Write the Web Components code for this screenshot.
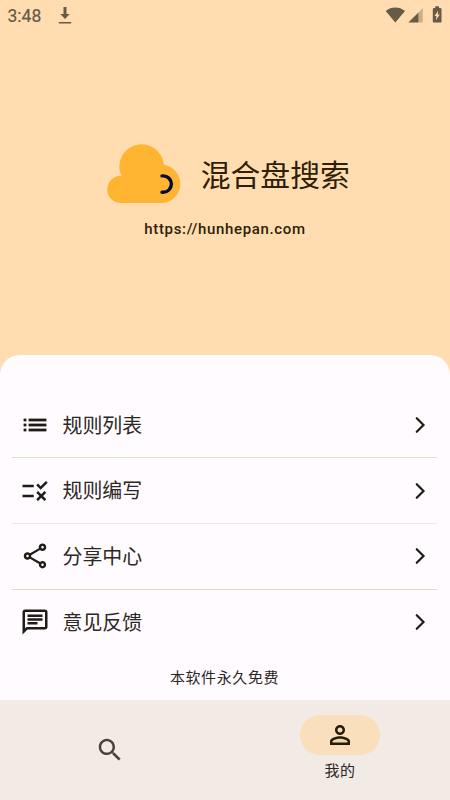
<!DOCTYPE html>
<html lang="zh-CN">
<head>
<meta charset="utf-8">
<title>混合盘搜索</title>
<style>
html,body{margin:0;height:100%}
body{background:#ffddb0;font-family:Roboto,"Noto Sans CJK SC",sans-serif;color:#1f1b16}
</style>
</head>
<body>
<profile-page></profile-page>
<script>
const define=(name,markup)=>{
  const t=document.createElement('template');
  t.innerHTML=markup;
  customElements.define(name,class extends HTMLElement{
    constructor(){super();this.attachShadow({mode:'open'}).append(t.content.cloneNode(true));}
  });
};

const ICONS={
  list:'<path stroke="currentColor" stroke-width=".2" d="M3 13h2v-2H3v2zm0 4h2v-2H3v2zm0-8h2V7H3v2zm4 4h14v-2H7v2zm0 4h14v-2H7v2zM7 7v2h14V7H7z"/>',
  rule:'<path d="M16.54 11 13 7.46l1.41-1.41 2.12 2.12 4.24-4.24 1.41 1.41L16.54 11zM11 7H2v2h9V7zm10 6.41L19.59 12 17 14.59 14.41 12 13 13.41 15.59 16 13 18.59 14.41 20 17 17.41 19.59 20 21 18.59 18.41 16 21 13.41zM11 15H2v2h9v-2z"/>',
  share:'<path d="M18 16.08c-.76 0-1.44.3-1.96.77L8.91 12.7c.05-.23.09-.46.09-.7s-.04-.47-.09-.7l7.05-4.11c.54.5 1.25.81 2.04.81 1.66 0 3-1.34 3-3s-1.34-3-3-3-3 1.34-3 3c0 .24.04.47.09.7L8.04 9.81C7.5 9.31 6.79 9 6 9c-1.66 0-3 1.34-3 3s1.34 3 3 3c.79 0 1.5-.31 2.04-.81l7.12 4.16c-.05.21-.08.43-.08.65 0 1.61 1.31 2.92 2.92 2.92s2.92-1.31 2.92-2.92-1.31-2.92-2.92-2.92zM18 4c.55 0 1 .45 1 1s-.45 1-1 1-1-.45-1-1 .45-1 1-1zM6 13c-.55 0-1-.45-1-1s.45-1 1-1 1 .45 1 1-.45 1-1 1zm12 7.02c-.55 0-1-.45-1-1s.45-1 1-1 1 .45 1 1-.45 1-1 1z"/>',
  chat:'<path d="M4 4h16v12H5.17L4 17.17V4m0-2c-1.1 0-1.99.9-1.99 2L2 22l4-4h14c1.1 0 2-.9 2-2V4c0-1.1-.9-2-2-2H4zm2 10h8v2H6v-2zm0-3h12v2H6V9zm0-3h12v2H6V6z"/>',
  chevron:'<path d="M9.4 6.600 14.800 12l-5.400 5.400" fill="none" stroke="currentColor" stroke-width="1.750" stroke-linecap="round"/>',
  search:'<path d="M15.5 14h-.79l-.28-.27C15.41 12.590 16 11.110 16 9.500 16 5.910 13.090 3 9.500 3S3 5.910 3 9.500 5.910 16 9.500 16c1.610 0 3.090-.59 4.230-1.570l.27.28v.79l5 4.990L20.490 19l-4.990-5zm-6 0C7.010 14 5 11.990 5 9.500S7.010 5 9.500 5 14 7.010 14 9.500 11.990 14 9.500 14z"/>',
  person:'<path fill="#eadb9c" d="M6 17.250C6.200 16.290 9.300 14.900 12 14.900s5.800 1.390 6 2.350V18H6z"/><path d="M12 6c1.100 0 2 .9 2 2s-.9 2-2 2-2-.9-2-2 .9-2 2-2m0 9c2.700 0 5.800 1.290 6 2v1H6v-.99c.2-.72 3.300-2.010 6-2.010m0-11C9.790 4 8 5.790 8 8s1.790 4 4 4 4-1.790 4-4-1.790-4-4-4zm0 9c-2.670 0-8 1.340-8 4v3h16v-3c0-2.660-5.330-4-8-4z"/>'
};
customElements.define('app-icon',class extends HTMLElement{
  constructor(){
    super();
    this.attachShadow({mode:'open'}).innerHTML='<style>:host{display:block;width:30px;height:30px;flex:none}svg{display:block;width:100%;height:100%}</style><svg viewBox="0 0 24 24" fill="currentColor">'+ICONS[this.getAttribute('name')]+'</svg>';
  }
});

define('status-bar',`<style>
:host{display:flex;height:32px;box-sizing:border-box;padding:0 8px 0 7.500px;align-items:center;color:#675a47;font-size:17.500px}
span{line-height:32px;-webkit-text-stroke:.2px}
svg{display:block}
.down{margin-left:16.500px}
.right{margin-left:auto}
</style>
<span>3:48</span>
<svg class="down" width="14" height="32" viewBox="0 0 14 32"><path fill="currentColor" d="M5.500 7h3v7h3.200L7 19l-4.700-5h3.200zM.8 22h12.400v1.600H.8z"/></svg>
<svg class="right" width="57" height="32" viewBox="385 0 57 32"><path fill="currentColor" d="M395.300 22.600 385.700 11Q390 7.600 395.300 7.600T405 11zM408.300 22.600 418.500 12.400V22.600zM434 8h1.200V6.300h3.800V8h1.300q1.200 0 1.200 1.200v12.200q0 1.200-1.200 1.200H434q-1.200 0-1.200-1.200V9.200Q432.800 8 434 8z"/><path fill="#675a47" fill-opacity=".35" d="M418.500 12.400 422.800 8.100V22.600h-4.300z"/><path fill="#ffddb0" d="M438.300 10.500 434.500 16h2l-.6 4.200 3.900-5.700h-2.100z"/></svg>`);

define('cloud-logo',`<style>:host{display:block;width:74px;height:60px}svg{display:block}</style>
<svg width="74" height="60" viewBox="107 144 74 60">
<g fill="#ffb532"><circle cx="141.600" cy="166.500" r="22.300"/><circle cx="161" cy="183.800" r="19.300"/><rect x="107.200" y="175.700" width="55" height="27.400" rx="13.700"/><path d="M120 176h42v27h-42z"/></g>
<path d="M162 175.900h1.200a8.200 8.200 0 0 1 0 16.400H162" fill="none" stroke="#09083b" stroke-width="3.400" stroke-linecap="round"/></svg>`);

define('brand-header',`<style>
:host{display:flex;flex-direction:column;align-items:center;height:323px;box-sizing:border-box;padding-top:112px;color:#2f1e08}
.row{display:flex;align-items:center;gap:20px;padding-left:6.500px}
h1{margin:0;font-size:29.800px;line-height:56px;padding-top:4px;font-weight:400}
p{margin:15px 0 0;font-size:15px;line-height:20px;font-weight:500;letter-spacing:.66px}
</style>
<div class="row"><cloud-logo></cloud-logo><h1><slot name="title"></slot></h1></div>
<p><slot name="url"></slot></p>`);

define('menu-item',`<style>
:host{display:flex;align-items:center;height:65.700px;box-sizing:border-box;padding:0 2.500px 0 7.500px;border-bottom:1px solid var(--line,#e5ddd3)}
span{flex:1;margin-left:13px;font-size:19.900px;line-height:30px;padding-top:3.500px;color:#2b2723}
</style><slot name="icon"></slot><span><slot></slot></span><app-icon name="chevron"></app-icon>`);

define('menu-sheet',`<style>
:host{display:flex;flex-direction:column;height:345px;box-sizing:border-box;padding:37.500px 13px 0 12px;background:#fffbff;border-radius:20px 20px 0 0}
footer{text-align:center;font-size:15px;line-height:22px;letter-spacing:.6px;margin-top:11.600px;color:#2b2723}
</style><slot></slot><footer><slot name="footer"></slot></footer>`);

define('nav-item',`<style>
:host{flex:1;display:flex;flex-direction:column;align-items:center;padding-top:15px;color:#4b4236;font-size:15px}
.pill{display:flex;align-items:center;justify-content:center;width:80px;height:40px;border-radius:20px}
span{line-height:20px;margin-top:6px;letter-spacing:.6px;color:#2b2723}
:host(:not([active])){padding-top:0;justify-content:center}
:host(:not([active])) span{display:none}
:host([active]){color:#251a0b}
:host([active]) .pill{background:#f9dfbb}
</style><div class="pill"><slot name="icon"></slot></div><span><slot></slot></span>`);

define('bottom-nav',`<style>:host{display:flex;gap:10px;height:100px;background:#f2eae4}</style><slot></slot>`);

define('profile-page',`<style>:host{display:flex;flex-direction:column;height:800px;overflow:hidden}</style>
<status-bar></status-bar>
<brand-header><span slot="title">混合盘搜索</span><span slot="url">https://hunhepan.com</span></brand-header>
<menu-sheet>
<menu-item style="--line:#e8dacd"><app-icon slot="icon" name="list"></app-icon>规则列表</menu-item>
<menu-item style="--line:#efe8e3"><app-icon slot="icon" name="rule"></app-icon>规则编写</menu-item>
<menu-item style="--line:#dfdac9"><app-icon slot="icon" name="share"></app-icon>分享中心</menu-item>
<menu-item style="--line:transparent"><app-icon slot="icon" name="chat"></app-icon>意见反馈</menu-item>
<span slot="footer">本软件永久免费</span>
</menu-sheet>
<bottom-nav>
<nav-item><app-icon slot="icon" name="search"></app-icon></nav-item>
<nav-item active><app-icon slot="icon" name="person"></app-icon>我的</nav-item>
</bottom-nav>`);
</script>
</body>
</html>
